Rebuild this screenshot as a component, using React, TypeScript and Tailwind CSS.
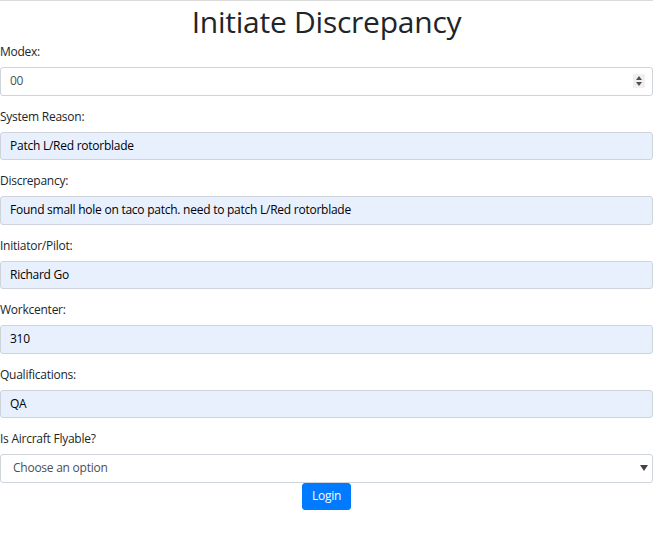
import React from "react";

const fields = [
  { label: "System Reason:", value: "Patch L/Red rotorblade" },
  { label: "Discrepancy:", value: "Found small hole on taco patch. need to patch L/Red rotorblade" },
  { label: "Initiator/Pilot:", value: "Richard Go" },
  { label: "Workcenter:", value: "310" },
  { label: "Qualifications:", value: "QA" },
];

export default function App() {
  return (
    <div
      className="w-[653px] h-[537px] bg-white border-t border-[#dadada] text-[#212529]"
      style={{ fontFamily: '"Open Sans", "Noto Sans", sans-serif' }}
    >
      <h1 className="text-[30px] leading-[41px] tracking-[-0.25px] font-normal text-center mb-[1px]">Initiate Discrepancy</h1>
      <div className="mb-[12px]">
        <label className="block text-[12px] leading-[18px] tracking-[-0.25px] mb-[6px]">Modex:</label>
        <div className="h-[28.5px] border border-[#ced4da] rounded-[3px] bg-white flex items-center pl-[9px] pr-[7px] text-[12px] tracking-[-0.25px] text-[#495057]">
          <span className="flex-1">00</span>
          <span className="w-[12px] h-[14px] bg-[#f0f0f0] flex flex-col items-center justify-center gap-[2px]">
            <svg width="6" height="4" viewBox="0 0 6 4"><path d="M3 0L6 4H0Z" fill="#505050" /></svg>
            <svg width="6" height="4" viewBox="0 0 6 4"><path d="M0 0H6L3 4Z" fill="#505050" /></svg>
          </span>
        </div>
      </div>
      {fields.map((f) => (
        <div key={f.label} className="mb-[12px]">
          <label className="block text-[12px] leading-[18px] tracking-[-0.25px] mb-[6px]">{f.label}</label>
          <div className="h-[28.5px] border border-[#ced4da] rounded-[3px] bg-[#e8f0fe] flex items-center px-[9px] text-[12px] tracking-[-0.25px] text-black">
            {f.value}
          </div>
        </div>
      ))}
      <div>
        <label className="block text-[12px] leading-[18px] tracking-[-0.25px] mb-[6px]">Is Aircraft Flyable?</label>
        <div className="h-[28.5px] border border-[#ced4da] rounded-[3px] bg-white flex items-center pl-[12px] pr-[4px] text-[12px] tracking-[-0.25px] text-[#495057]">
          <span className="flex-1">Choose an option</span>
          <svg width="8" height="6" viewBox="0 0 8 6"><path d="M0 0H8L4 6Z" fill="#444" /></svg>
        </div>
      </div>
      <div className="flex justify-center">
        <button className="h-[27px] px-[9px] bg-[#007bff] text-white text-[12px] leading-[18px] tracking-[-0.25px] rounded-[3px] border border-[#007bff]">
          Login
        </button>
      </div>
    </div>
  );
}
